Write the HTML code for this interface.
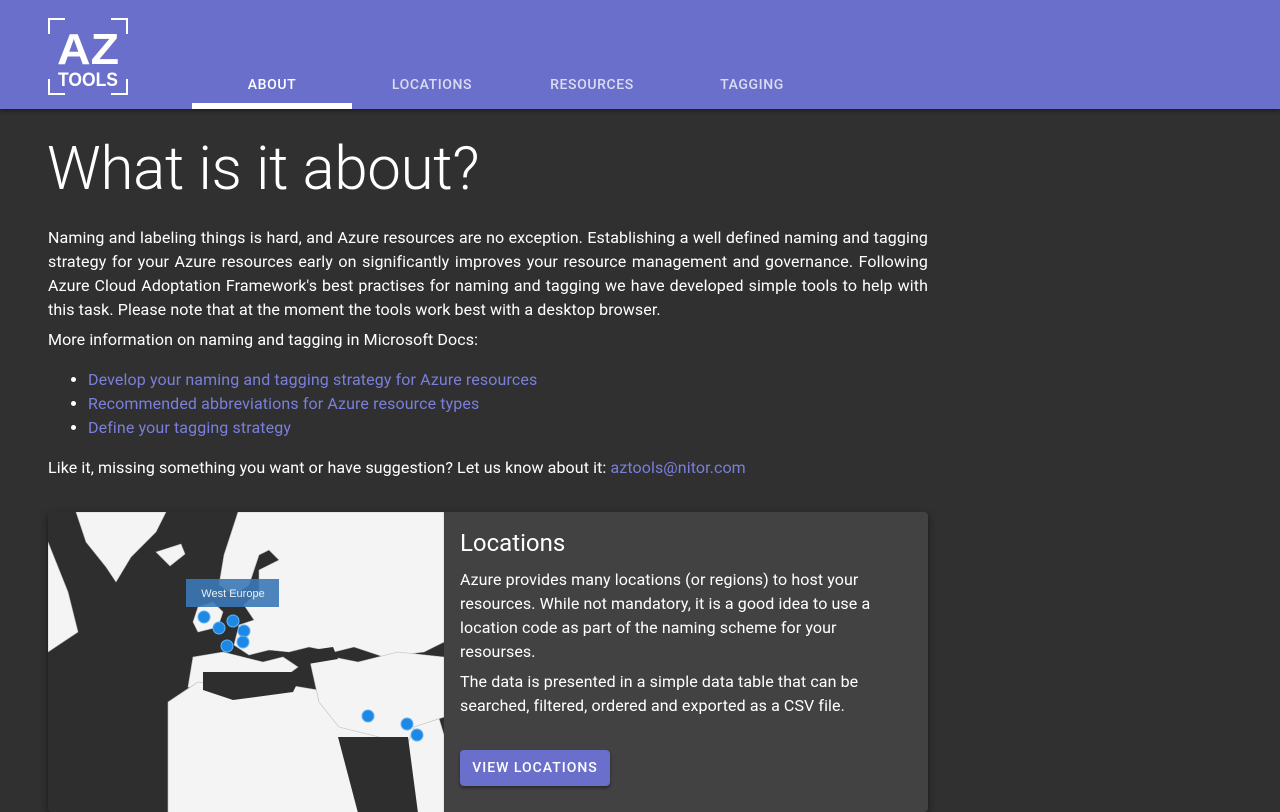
<!DOCTYPE html>
<html><head><meta charset="utf-8"><style>
*{box-sizing:border-box;margin:0;padding:0}
body{width:1280px;height:800px;overflow:hidden;background:#303030;font-family:"Roboto","Liberation Sans",sans-serif;color:#fff}
.top{height:109px;background:#6a6fcb;position:relative;box-shadow:0 2px 4px rgba(0,0,0,.4)}
.logo{position:absolute;left:48px;top:18px;width:80px;height:77px}
.tab{position:absolute;top:77px;width:160px;text-align:center;font-size:14px;letter-spacing:.6px;color:rgba(255,255,255,.75);font-weight:500}
.tab.act{color:#fff}
.ink{position:absolute;left:192px;top:103px;width:160px;height:6px;background:#fff}
h1{position:absolute;left:47px;top:133px;font-size:60px;font-weight:300;letter-spacing:-.3px}
.p{position:absolute;left:48px;width:880px;font-size:16px;line-height:24px;letter-spacing:.1px}
a{color:#7a7fdb;text-decoration:none}
ul{position:absolute;left:88px;top:368px;font-size:16px;line-height:24px;letter-spacing:.12px}
.card{position:absolute;left:48px;top:512px;width:880px;height:300px;background:#424242;border-radius:4px;overflow:hidden;box-shadow:0 3px 8px rgba(0,0,0,.5)}
.map{position:absolute;left:0;top:0;width:396px;height:300px}
.ct{position:absolute;left:412px;top:17px;font-size:24px}
.cp{position:absolute;left:412px;width:420px;font-size:16px;line-height:24px;letter-spacing:.1px}
.btn{position:absolute;left:412px;top:238px;width:150px;height:36px;background:#6a6fcb;border-radius:4px;font-size:14px;font-weight:500;letter-spacing:1px;text-align:center;line-height:37px;box-shadow:0 2px 3px rgba(0,0,0,.4)}
</style></head><body>
<div class="top">
<svg class="logo" viewBox="0 0 80 77"><g fill="none" stroke="#fff" stroke-width="2"><path d="M1 16V1h16M63 1h16v15M1 61v15h16M63 76h16V61"/></g>
<text x="40" y="46" fill="#fff" font-family="Liberation Sans" font-weight="bold" font-size="44" text-anchor="middle" textLength="62" lengthAdjust="spacingAndGlyphs">AZ</text>
<text x="40" y="68" fill="#fff" font-family="Liberation Sans" font-weight="bold" font-size="19" text-anchor="middle" textLength="60" lengthAdjust="spacingAndGlyphs">TOOLS</text></svg>
<div class="tab act" style="left:192px">ABOUT</div>
<div class="tab" style="left:352px">LOCATIONS</div>
<div class="tab" style="left:512px">RESOURCES</div>
<div class="tab" style="left:672px">TAGGING</div>
<div class="ink"></div>
</div>
<h1>What is it about?</h1>
<div class="p" style="top:226px;text-align:justify">Naming and labeling things is hard, and Azure resources are no exception. Establishing a well defined naming and tagging strategy for your Azure resources early on significantly improves your resource management and governance. Following Azure Cloud Adoptation Framework's best practises for naming and tagging we have developed simple tools to help with this task. Please note that at the moment the tools work best with a desktop browser.</div>
<div class="p" style="top:328px">More information on naming and tagging in Microsoft Docs:</div>
<ul><li><a>Develop your naming and tagging strategy for Azure resources</a></li><li><a>Recommended abbreviations for Azure resource types</a></li><li><a>Define your tagging strategy</a></li></ul>
<div class="p" style="top:456px">Like it, missing something you want or have suggestion? Let us know about it: <a>aztools@nitor.com</a></div>
<div class="card">
<svg class="map" viewBox="0 0 396 300"><rect width="396" height="300" fill="#2e2e2e"/>
<g fill="#f4f4f4" stroke="#bbb" stroke-width=".6">
<path d="M28 0h90l-10 20-25 25-15 25-10-15-20-25z"/>
<path d="M0 30l20 50 10 40-30 20z"/>
<path d="M108 40l25-8 4 10-15 12z"/>
<path d="M190 0h206v130l-20 10-40 5-30-10-20 5-25-5-20 5-20-2-20 5-15-10 5-20 15-5-10-15 15-15 0-20 20-10-10-10-10 5-10 30-15 10-15-10 5-30z"/>
<path d="M150 95l15-5 10 10-5 15-20 5-5-10z"/>
<path d="M145 145l30-5 40 10 20-5 15 10-20 15-30 5-20-5-25 10-15-5z"/>
<path d="M120 190l30-20 40 8 50-5 30 5 20 30 30 10 20-20 30-15 20 20 6 20v80H120z"/>
<path d="M260 140l50 10 40-10 46 5v60l-30 10-15 40-20-30-40-10-20-25z"/>
</g>
<g fill="#2e2e2e"><path d="M155 160h100l-10 20-60 8-30-10z"/><path d="M250 140l35-5 5 12-30 5z"/><path d="M290 225l70 0 10 76h-60z"/></g>
<g fill="#1e88e5" stroke="#64b5f6" stroke-width="1"><circle cx="156" cy="105" r="6"/><circle cx="171" cy="116" r="6"/><circle cx="185" cy="109" r="6"/><circle cx="196" cy="119" r="6"/><circle cx="195" cy="130" r="6"/><circle cx="179" cy="134" r="6"/><circle cx="320" cy="204" r="6"/><circle cx="359" cy="212" r="6"/><circle cx="369" cy="223" r="6"/></g>
<rect x="138" y="67" width="93" height="28" fill="#3a78b5" opacity=".9"/>
<text x="185" y="85" fill="#eee" font-size="11" text-anchor="middle" font-family="Liberation Sans">West Europe</text>
</svg>
<div class="ct">Locations</div>
<div class="cp" style="top:56px">Azure provides many locations (or regions) to host your resources. While not mandatory, it is a good idea to use a location code as part of the naming scheme for your resourses.</div>
<div class="cp" style="top:158px">The data is presented in a simple data table that can be searched, filtered, ordered and exported as a CSV file.</div>
<div class="btn">VIEW LOCATIONS</div>
</div>
</body></html>
